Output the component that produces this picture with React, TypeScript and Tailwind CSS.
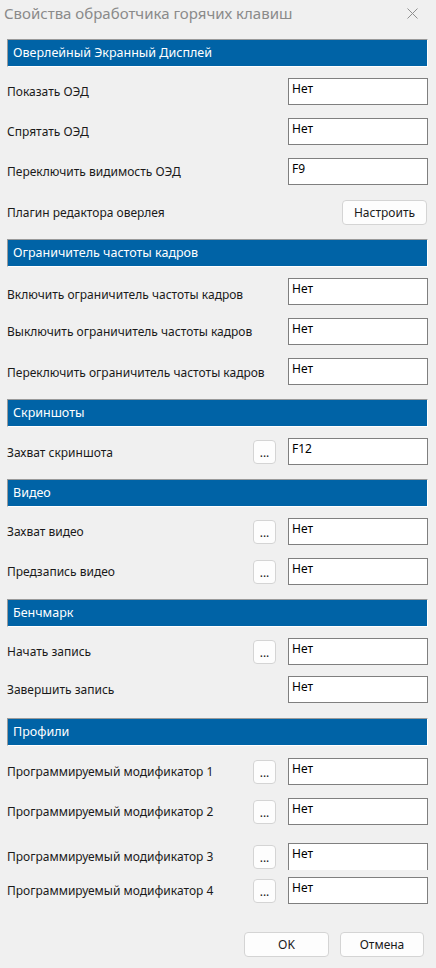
import React from 'react';

type Row = { label: string; value?: string; dots?: boolean; button?: string; mt: number; labelPt?: number; noBottom?: boolean };
type Section = { title: string; mt: number; rows: Row[] };

const sections: Section[] = [
  {
    title: 'Оверлейный Экранный Дисплей',
    mt: 0,
    rows: [
      { label: 'Показать ОЭД', value: 'Нет', mt: 11 },
      { label: 'Спрятать ОЭД', value: 'Нет', mt: 13 },
      { label: 'Переключить видимость ОЭД', value: 'F9', mt: 13 },
      { label: 'Плагин редактора оверлея', button: 'Настроить', mt: 14 },
    ],
  },
  {
    title: 'Ограничитель частоты кадров',
    mt: 13,
    rows: [
      { label: 'Включить ограничитель частоты кадров', value: 'Нет', mt: 11, labelPt: 6 },
      { label: 'Выключить ограничитель частоты кадров', value: 'Нет', mt: 13 },
      { label: 'Переключить ограничитель частоты кадров', value: 'Нет', mt: 13, labelPt: 3 },
    ],
  },
  {
    title: 'Скриншоты',
    mt: 14,
    rows: [{ label: 'Захват скриншота', value: 'F12', dots: true, mt: 11, labelPt: 3 }],
  },
  {
    title: 'Видео',
    mt: 14,
    rows: [
      { label: 'Захват видео', value: 'Нет', dots: true, mt: 11 },
      { label: 'Предзапись видео', value: 'Нет', dots: true, mt: 13 },
    ],
  },
  {
    title: 'Бенчмарк',
    mt: 14,
    rows: [
      { label: 'Начать запись', value: 'Нет', dots: true, mt: 11 },
      { label: 'Завершить запись', value: 'Нет', mt: 11 },
    ],
  },
  {
    title: 'Профили',
    mt: 15,
    rows: [
      { label: 'Программируемый модификатор 1', value: 'Нет', dots: true, mt: 12 },
      { label: 'Программируемый модификатор 2', value: 'Нет', dots: true, mt: 13 },
      { label: 'Программируемый модификатор 3', value: 'Нет', dots: true, mt: 18, noBottom: true },
      { label: 'Программируемый модификатор 4', value: 'Нет', dots: true, mt: 7 },
    ],
  },
];

const font = { fontFamily: '"Segoe UI", "Noto Sans", sans-serif' };

function HotkeyRow({ row }: { row: Row }) {
  return (
    <div className="flex h-[27px] items-center" style={{ marginTop: row.mt }}>
      <div className="flex-1 text-[12px] text-[#1a1a1a]" style={{ paddingTop: row.labelPt ?? 0 }}>
        {row.label}
      </div>
      {row.dots && (
        <button className="mr-[12px] flex h-[24px] w-[23px] items-end justify-center rounded-[4px] border border-[#d4d4d4] bg-[#fdfdfd] pb-[4px] text-[12px] leading-none text-[#1a1a1a]">
          ...
        </button>
      )}
      {row.value !== undefined && (
        <div
          className={`h-[27px] w-[140px] border border-[#7f7f7f] bg-white pl-[3px] pt-[2px] text-[12px] leading-[16px] text-black ${row.noBottom ? 'border-b-0' : ''}`}
        >
          {row.value}
        </div>
      )}
      {row.button && (
        <button className="mr-[1px] h-[25px] w-[85px] rounded-[4px] border border-[#d4d4d4] bg-[#fdfdfd] text-[12px] text-[#1a1a1a]">
          {row.button}
        </button>
      )}
    </div>
  );
}

export default function App() {
  return (
    <div className="flex h-[968px] w-[436px] flex-col bg-[#f0f0f0]" style={font}>
      {/* Title bar */}
      <div className="flex h-[27px] items-center justify-between pl-[4px] pr-[18px] pt-[0px]">
        <span className="text-[15px] text-[#8a8a8a]">Свойства обработчика горячих клавиш</span>
        <svg width="11" height="11" viewBox="0 0 11 11" className="text-[#8f8f8f]">
          <path d="M0.5 0.5 L10.5 10.5 M10.5 0.5 L0.5 10.5" stroke="currentColor" strokeWidth="1" />
        </svg>
      </div>

      <div className="flex flex-col pl-[7px] pr-[8px] pt-[12px]">
        {sections.map((s) => (
          <div key={s.title} className="flex flex-col" style={{ marginTop: s.mt }}>
            <div className="flex h-[28px] items-center border border-b-white border-l-[#9a9a9a] border-r-white border-t-[#9a9a9a] bg-[#0063a6] pl-[5px] text-[12.5px] text-white">
              {s.title}
            </div>
            {s.rows.map((r) => (
              <HotkeyRow key={r.label} row={r} />
            ))}
          </div>
        ))}
      </div>

      <div className="mt-[28px] flex justify-end gap-[11px] pr-[12px]">
        <button className="h-[25px] w-[85px] rounded-[4px] border border-[#d4d4d4] bg-[#fdfdfd] text-[12px] text-[#1a1a1a]">
          OK
        </button>
        <button className="h-[25px] w-[84px] rounded-[4px] border border-[#d4d4d4] bg-[#fdfdfd] text-[12px] text-[#1a1a1a]">
          Отмена
        </button>
      </div>
    </div>
  );
}
